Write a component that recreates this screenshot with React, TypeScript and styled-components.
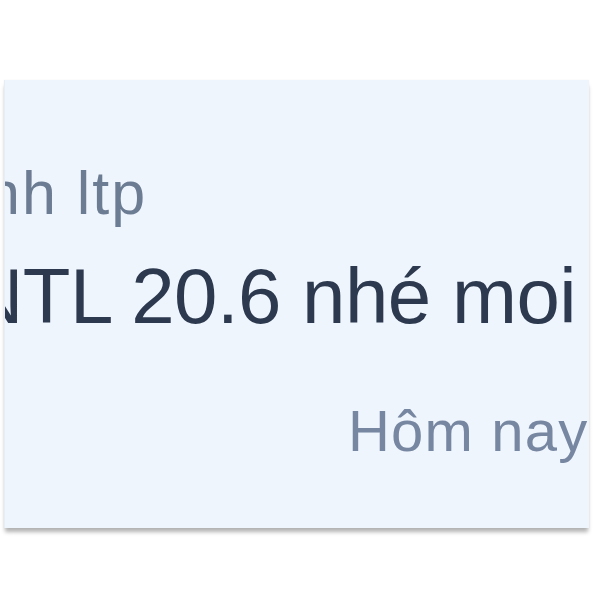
import React from "react";
import styled, { createGlobalStyle } from "styled-components";

const GlobalStyle = createGlobalStyle`
  html, body {
    margin: 0;
    padding: 0;
    background: #ffffff;
    overflow: hidden;
  }
`;

const Page = styled.div`
  width: 600px;
  height: 600px;
  padding-top: 80px;
  padding-left: 4px;
  box-sizing: border-box;
  overflow: hidden;
  font-family: "Liberation Sans", Arial, sans-serif;
`;

// the message bubble, shown zoomed in and cropped on the left
const Card = styled.div`
  width: 585px;
  height: 448px;
  box-sizing: border-box;
  padding-top: 77px;
  background: #eff5fd;
  border-left: 1px solid #e6edf6;
  box-shadow: 0 5px 4px -1px rgba(0, 0, 0, 0.3), 0 0 2px rgba(0, 0, 0, 0.04);
  display: flex;
  flex-direction: column;
  overflow: hidden;
`;

const Content = styled.div`
  margin-left: -37px;
  display: flex;
  flex-direction: column;
`;

const Sender = styled.div`
  margin-left: 18px;
  font-size: 61px;
  line-height: 72px;
  letter-spacing: 2px;
  color: #6c7c93;
  white-space: nowrap;
`;

const Message = styled.div`
  margin-top: 21px;
  margin-left: -1px;
  font-size: 78px;
  line-height: 92px;
  letter-spacing: -0.5px;
  color: #2c394e;
  white-space: nowrap;
`;

const Time = styled.div<{ $offset: number }>`
  margin-top: 54px;
  margin-left: ${(p) => p.$offset}px;
  font-size: 58px;
  line-height: 70px;
  letter-spacing: 1.2px;
  color: #7787a1;
  white-space: nowrap;
`;

export default function App() {
  return (
    <>
      <GlobalStyle />
      <Page>
        <Card>
          <Content>
            <Sender>nh ltp</Sender>
            <Message>NTL 20.6 nhé moi</Message>
            <Time $offset={380}>Hôm nay</Time>
          </Content>
        </Card>
      </Page>
    </>
  );
}
